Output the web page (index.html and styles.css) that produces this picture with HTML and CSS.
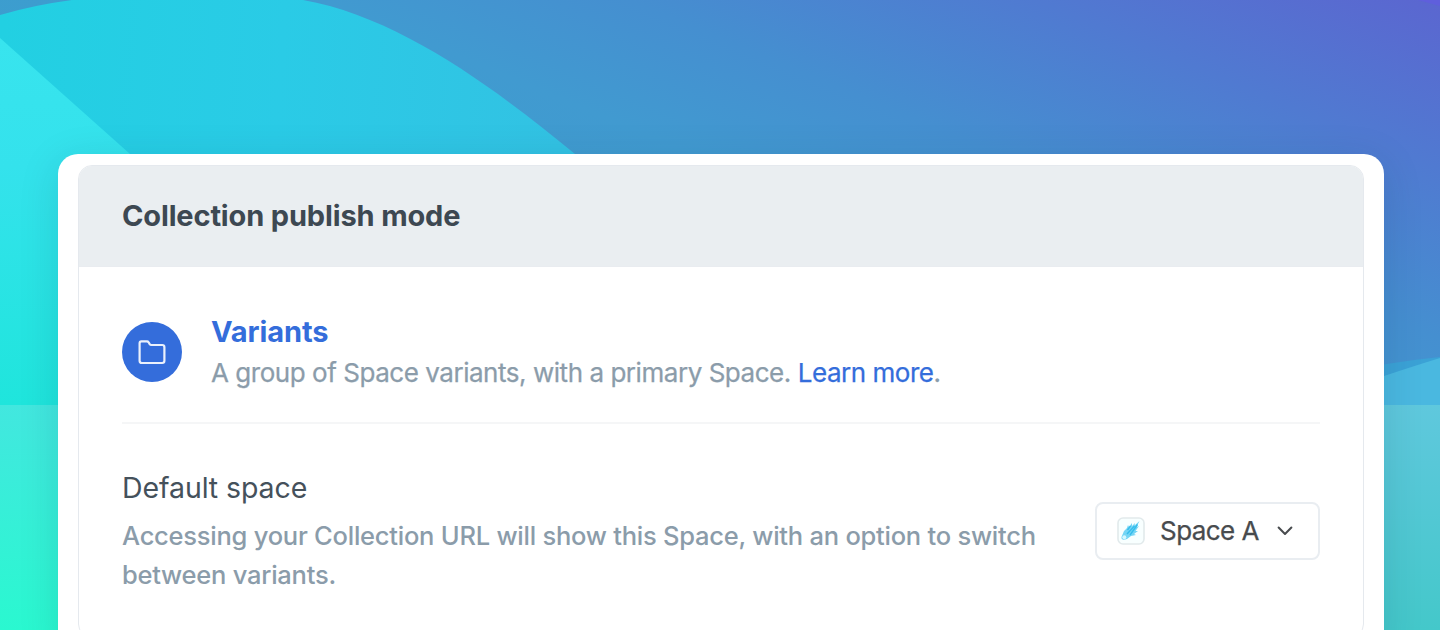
FILE: index.html
```html
<!DOCTYPE html>
<html lang="en">
<head>
<meta charset="utf-8">
<title>Collection publish mode</title>
<link rel="stylesheet" href="styles.css">
</head>
<body>
<svg class="backdrop" viewBox="0 0 1440 630" preserveAspectRatio="none" aria-hidden="true">
  <defs>
    <linearGradient id="sky" gradientUnits="userSpaceOnUse" x1="1440" y1="0" x2="1140" y2="720">
      <stop offset="0" stop-color="#5b66d0"/><stop offset=".2" stop-color="#507ad1"/><stop offset=".4" stop-color="#458fd0"/><stop offset=".55" stop-color="#419ad0"/><stop offset=".8" stop-color="#3a9fce"/>
    </linearGradient>
    <linearGradient id="hill" gradientUnits="userSpaceOnUse" x1="0" y1="60" x2="560" y2="100">
      <stop offset="0" stop-color="#22d0e2"/><stop offset=".5" stop-color="#2acbe6"/><stop offset="1" stop-color="#32c2e3"/>
    </linearGradient>
    <linearGradient id="slope" x1="0" y1="0" x2="0" y2="1">
      <stop offset="0" stop-color="#38e4ee"/><stop offset=".35" stop-color="#34e2ec"/><stop offset="1" stop-color="#1fe5dc"/>
    </linearGradient>
    <linearGradient id="leftFloor" x1="0" y1="0" x2="0" y2="1">
      <stop offset="0" stop-color="#42e7df"/><stop offset="1" stop-color="#2af8d0"/>
    </linearGradient>
    <linearGradient id="rightFloor" x1="0" y1="0" x2="0" y2="1">
      <stop offset="0" stop-color="#5fc8dd"/><stop offset="1" stop-color="#44c8ca"/>
    </linearGradient>
  </defs>
  <rect width="1440" height="630" fill="url(#sky)"/>
  <path d="M1418 0H1440V6Z" fill="#5f5fdc"/>
  <path d="M0 15Q34 5 72 0H303C400 17 497 90 575 154L700 280H0Z" fill="url(#hill)"/>
  <path d="M0 38L130 154L200 220V405H0Z" fill="url(#slope)"/>
  <path d="M1340 373Q1390 362 1440 357V420H1340Z" fill="#3ba2d6"/>
  <path d="M1340 391L1384 376Q1414 366 1440 358V420H1340Z" fill="#4ab8e0"/>
  <rect y="405" width="720" height="225" fill="url(#leftFloor)"/>
  <rect x="720" y="405" width="720" height="225" fill="url(#rightFloor)"/>
</svg>
<main class="card">
  <section class="panel">
    <h1 class="panel-header">Collection publish mode</h1>
    <div class="panel-body">
      <div class="mode">
        <span class="mode-icon">
          <svg width="30" height="30" viewBox="0 0 30 30" fill="none" stroke="#fff" stroke-opacity=".9" stroke-width="2.2" stroke-linejoin="round"><path d="M2.6 6.2Q2.6 4.4 4.4 4.4H10Q11 4.4 11.6 5.3L12.7 7.1Q13.3 8 14.4 8H25.2Q27.4 8 27.4 10.2V23.8Q27.4 26 25.2 26H4.8Q2.6 26 2.6 23.8Z"/></svg>
        </span>
        <div>
          <h2 class="mode-title">Variants</h2>
          <p class="mode-text">A group of Space variants, with a primary Space. <a class="link">Learn more</a>.</p>
        </div>
      </div>
      <div class="setting">
        <div class="setting-copy">
          <h3 class="setting-title">Default space</h3>
          <p class="setting-text">Accessing your Collection URL will show this Space, with an option to switch<br>between variants.</p>
        </div>
        <button class="select" type="button">
          <svg class="space-icon" width="28" height="28" viewBox="0 0 28 28"><rect x="1" y="1" width="26" height="26" rx="5" fill="#f8ffff" stroke="#e2eaec" stroke-width="1.6"/><path d="M4.5 20L7 14L10 11L11 8L12 10L15 6L15 9L18 6L17.5 8.5L22.5 4L19.5 10L22 9L18.5 14L21 14L17 17L19 18L14 19L10 22Q4 24 4.5 20Z" fill="#74d5f5"/><path d="M10 17L17.5 9M13 18L20.5 7.5M10.5 13L13.5 9" stroke="#35bdec" stroke-width="1.4"/><circle cx="7.3" cy="20.3" r="2" fill="#d4f7ff"/></svg>
          <span class="select-label">Space A</span>
          <svg class="chevron" width="16" height="10" viewBox="0 0 16 10" fill="none" stroke="#484b4e" stroke-width="2" stroke-linecap="round" stroke-linejoin="round"><path d="M1.6 1.5L8 8L14.4 1.5"/></svg>
        </button>
      </div>
    </div>
  </section>
</main>
</body>
</html>
```

FILE: styles.css
```css
* { box-sizing: border-box; }
body {
  margin: 0;
  height: 630px;
  padding: 154px 56px 0 58px;
  overflow: hidden;
  font-family: Inter, "Liberation Sans", sans-serif;
}
.backdrop { position: absolute; inset: 0; width: 1440px; height: 630px; z-index: -1; }
.card {
  height: 500px;
  padding: 11px 20px;
  background: #fff;
  border-radius: 20px;
  box-shadow: 0 8px 40px rgba(0, 40, 70, .13);
}
.panel { height: 473px; border: 1.5px solid #e5e9ee; border-radius: 14px; overflow: hidden; }
.panel-header {
  margin: 0;
  height: 101px;
  padding: 0 43px;
  background: #eaeef1;
  border-bottom: 1px solid #e9ecf0;
  color: #3d4852;
  font-size: 29px;
  font-weight: 700;
  letter-spacing: -.15px;
  line-height: 100px;
}
.panel-body { padding: 0 43px; }
.mode {
  display: flex;
  align-items: center;
  gap: 29px;
  height: 157px;
  padding-top: 15px;
  border-bottom: 2px solid #f5f6f7;
}
.mode-icon {
  display: flex;
  align-items: center;
  justify-content: center;
  width: 60px;
  height: 60px;
  border-radius: 50%;
  background: #346ddb;
}
.mode-title { margin: 0; color: #346ddb; font-size: 29px; font-weight: 700; letter-spacing: -.1px; line-height: 40px; }
.mode-text { margin: 0; color: #8b9caa; font-size: 26px; letter-spacing: -.46px; line-height: 41px; white-space: nowrap; -webkit-text-stroke: .25px currentColor; }
.link { color: #346ddb; }
.setting { display: flex; justify-content: space-between; padding-top: 44px; }
.setting-title { margin: 0; color: #45515b; font-size: 28.5px; font-weight: 400; line-height: 40px; letter-spacing: -.1px; }
.setting-text { margin: 8px 0 0; color: #8b9caa; font-size: 25.5px; font-weight: 500; letter-spacing: -.24px; line-height: 39px; white-space: nowrap; }
.select {
  display: flex;
  align-items: center;
  width: 225px;
  height: 58px;
  margin: 34px 0 0;
  padding: 0 20px;
  border: 2px solid #e9edf1;
  border-radius: 8px;
  background: #fff;
  color: #484b4e;
  font: 400 26px Inter, "Liberation Sans", sans-serif;
  letter-spacing: -.55px;
  -webkit-text-stroke: .25px currentColor;
}
.select-label { margin-left: 15px; padding-bottom: 2px; white-space: nowrap; }
.chevron { margin-left: auto; margin-right: 5px; }
```
